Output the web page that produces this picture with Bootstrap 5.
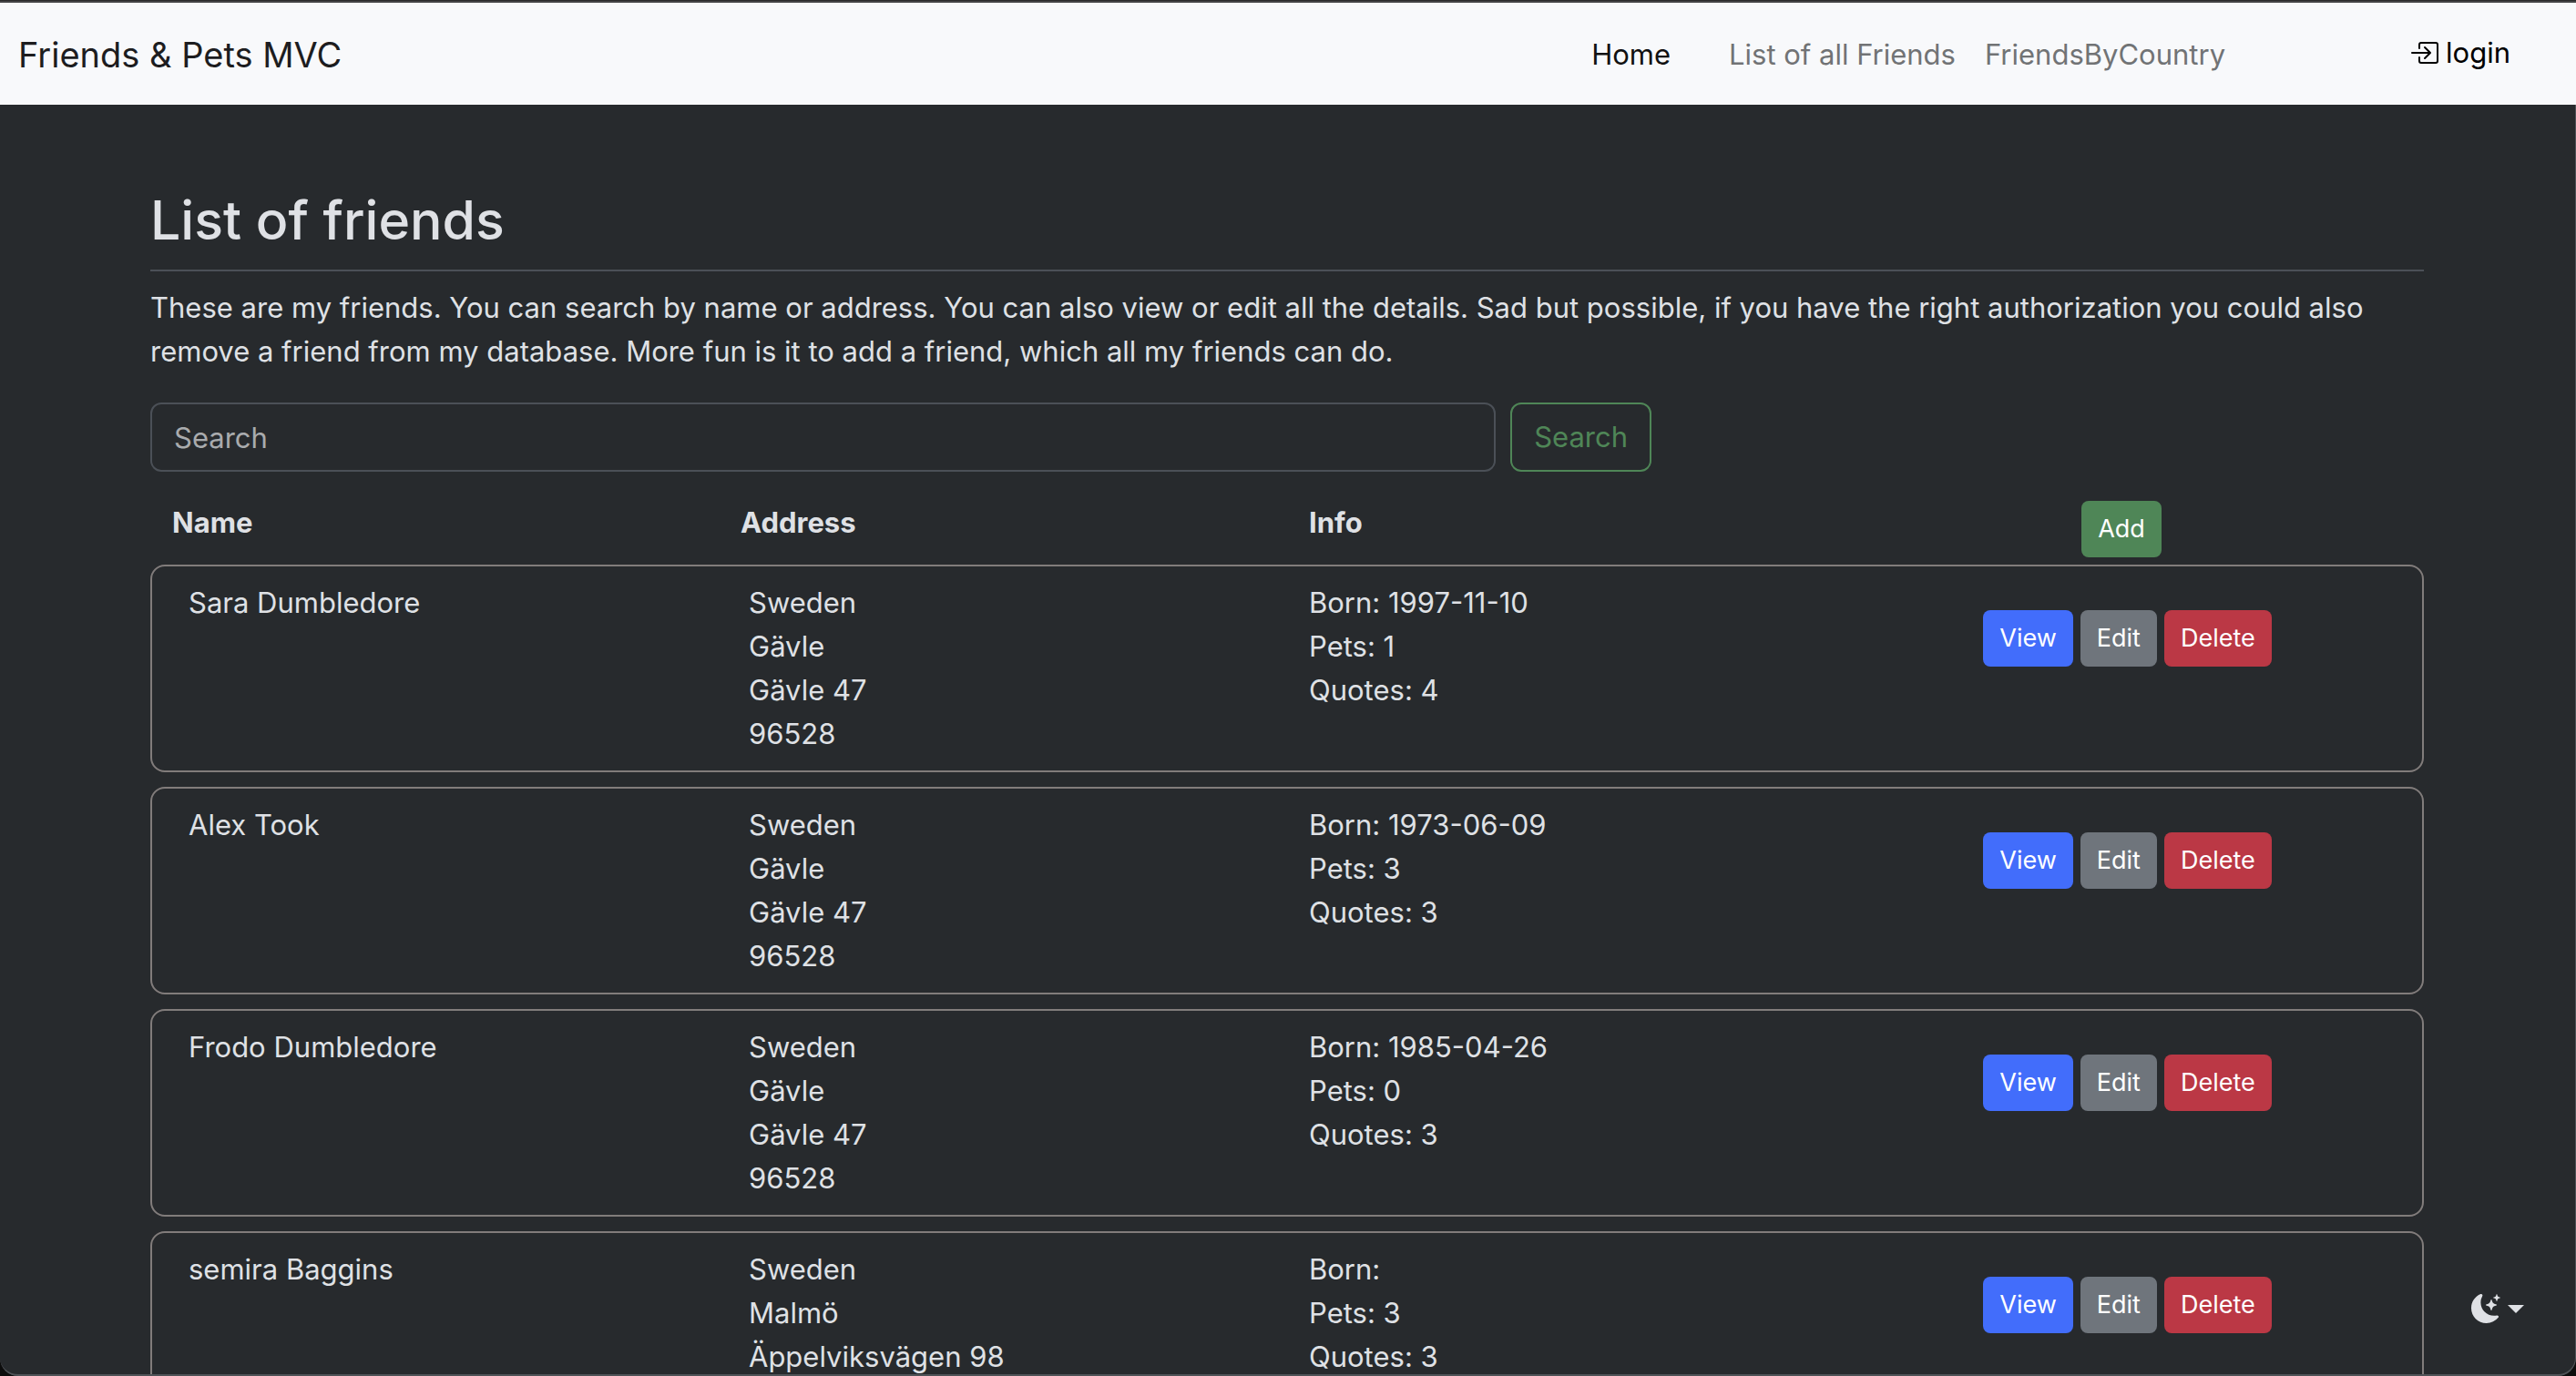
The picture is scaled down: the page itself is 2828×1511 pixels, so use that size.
<!DOCTYPE html>
<html lang="en" data-bs-theme="dark">
<head>
<meta charset="utf-8">
<meta name="viewport" content="width=device-width, initial-scale=1">
<title>Friends &amp; Pets MVC</title>
<link href="https://cdn.jsdelivr.net/npm/bootstrap@5.3.0/dist/css/bootstrap.min.css" rel="stylesheet">
<style>
  html { font-size: 32px; }
  body {
    font-family: Inter, "Liberation Sans", sans-serif;
    font-size: 31px;
    line-height: 48px;
    color: #dfe1e5;
    background: #272a2d;
    padding-right: 2px;
  }
  /* window frame around the page */
  .window-top { height: 3px; background: #434345; border-top: 1px solid #2a2a2b; margin-right: -2px; flex: none; }
  .window-edge {
    position: fixed; inset: 3px 0 0 0; pointer-events: none; z-index: 10;
    border: solid #4f5357; border-width: 0 1px 2px 0;
    border-radius: 0 0 20px 20px;
    box-shadow: 0 0 0 20px #0d0d0d;
    clip-path: inset(112px 0 0 0);
  }
  .top-nav { background: #f8f9fb; min-height: 112px; margin-right: -2px; padding: 2px 72px 0 20px; flex: none; }
  .top-nav .navbar-brand { font-size: 38px; color: #1d1d1f; }
  .top-nav a { color: #717375; text-decoration: none; }
  .top-nav .link-home { color: #111; margin-right: 64px; }
  .top-nav .nav-login { color: #000; margin-left: 202px; gap: 8px; padding-bottom: 4px; }
  .friends-main { overflow-y: auto; scrollbar-width: none; min-height: 0; }
  .friends-main::-webkit-scrollbar { display: none; }
  .page-wrap { max-width: 2496px; padding-top: 88px; }
  .page-title { font-size: 59px; line-height: 77px; color: #dfe1e5; border-bottom: 2px solid #4b5057; }
  .form-control { font-size: 31px; line-height: 48px; height: 76px; padding: 12px 24px; background: #272a2d; border: 2px solid #4b5057; border-radius: 12px; }
  .form-control::placeholder { color: #a9abad; opacity: 1; }
  .btn { border-width: 2px; }
  .btn-search { font-size: 31px; line-height: 48px; padding: 12px 24px; border-radius: 12px; color: #4f8657; border-color: #4f8657; height: 76px; display: flex; align-items: center; }
  .btn-sm { font-size: 27px; line-height: 42px; padding: 8px 16px; border-radius: 8px; color: #fff; }
  .btn-add { background: #4f8657; }
  .btn-view { background: #426dfb; }
  .btn-edit { background: #6f757c; }
  .btn-del { background: #bb3845; }
  .head-row { margin: 32px 0 0; min-height: 70px; }
  .head-row .add-col { padding-right: 64px; }
  .friend-item { border: 2px solid #817c7b; border-radius: 16px; padding: 16px; margin-bottom: 16px; }
  .friend-item .btn-col { padding-top: 32px; gap: 8px; }
  .theme-toggle { position: fixed; right: 57px; bottom: 58px; color: #dfe1e5; gap: 8px; }
  .caret-down { border: 9px solid transparent; border-top-color: #dfe1e5; border-bottom: 0; }
</style>
</head>
<body class="vh-100 overflow-hidden d-flex flex-column">
<div class="window-top"></div>
<nav class="top-nav d-flex align-items-center">
  <a class="navbar-brand me-auto" href="#">Friends &amp; Pets MVC</a>
  <a class="link-home" href="#">Home</a>
  <a class="me-3" href="#">List of all Friends</a>
  <a href="#">FriendsByCountry</a>
  <a class="nav-login d-flex align-items-center" href="#">
    <svg width="32" height="32" viewBox="0 0 16 16" fill="currentColor" aria-hidden="true"><path d="M6 3.500a.5.5 0 0 1 .5-.5h8a.5.5 0 0 1 .5.5v9a.5.5 0 0 1-.5.5h-8a.5.5 0 0 1-.5-.5v-2a.5.5 0 0 0-1 0v2A1.500 1.500 0 0 0 6.500 14h8a1.500 1.500 0 0 0 1.500-1.500v-9A1.500 1.500 0 0 0 14.500 2h-8A1.500 1.500 0 0 0 5 3.500v2a.5.5 0 0 0 1 0z"/><path d="M11.854 8.354a.5.5 0 0 0 0-.708l-3-3a.5.5 0 1 0-.708.708L10.293 7.500H1.500a.5.5 0 0 0 0 1h8.793l-2.147 2.146a.5.5 0 0 0 .708.708z"/></svg>
    <span>login</span>
  </a>
</nav>
<main class="friends-main flex-grow-1">
  <div class="page-wrap mx-auto">
    <h2 class="page-title pb-2 mb-2">List of friends</h2>
    <p class="intro mb-3">These are my friends. You can search by name or address. You can also view or edit all the details. Sad but possible, if you have the right authorization you could also remove a friend from my database. More fun is it to add a friend, which all my friends can do.</p>
    <div class="row">
      <form class="col-8 d-flex gap-2" role="search">
        <input class="form-control" type="search" placeholder="Search" aria-label="Search">
        <button class="btn btn-search" type="button">Search</button>
      </form>
    </div>
    <div class="row head-row fw-bold">
      <div class="col-3">Name</div>
      <div class="col-3">Address</div>
      <div class="col-3">Info</div>
      <div class="col-3 text-center add-col"><a class="btn btn-sm btn-add" href="#">Add</a></div>
    </div>

    <div class="friend-item"><div class="row mx-0">
      <div class="col-3">Sara Dumbledore</div>
      <div class="col-3">Sweden<br>Gävle<br>Gävle 47<br>96528</div>
      <div class="col-3">Born: 1997-11-10<br>Pets: 1<br>Quotes: 4</div>
      <div class="col-3 btn-col d-flex justify-content-center align-items-start"><a class="btn btn-sm btn-view" href="#">View</a><a class="btn btn-sm btn-edit" href="#">Edit</a><button class="btn btn-sm btn-del" type="button">Delete</button></div>
    </div></div>

    <div class="friend-item"><div class="row mx-0">
      <div class="col-3">Alex Took</div>
      <div class="col-3">Sweden<br>Gävle<br>Gävle 47<br>96528</div>
      <div class="col-3">Born: 1973-06-09<br>Pets: 3<br>Quotes: 3</div>
      <div class="col-3 btn-col d-flex justify-content-center align-items-start"><a class="btn btn-sm btn-view" href="#">View</a><a class="btn btn-sm btn-edit" href="#">Edit</a><button class="btn btn-sm btn-del" type="button">Delete</button></div>
    </div></div>

    <div class="friend-item"><div class="row mx-0">
      <div class="col-3">Frodo Dumbledore</div>
      <div class="col-3">Sweden<br>Gävle<br>Gävle 47<br>96528</div>
      <div class="col-3">Born: 1985-04-26<br>Pets: 0<br>Quotes: 3</div>
      <div class="col-3 btn-col d-flex justify-content-center align-items-start"><a class="btn btn-sm btn-view" href="#">View</a><a class="btn btn-sm btn-edit" href="#">Edit</a><button class="btn btn-sm btn-del" type="button">Delete</button></div>
    </div></div>

    <div class="friend-item"><div class="row mx-0">
      <div class="col-3">semira Baggins</div>
      <div class="col-3">Sweden<br>Malmö<br>Äppelviksvägen 98</div>
      <div class="col-3">Born:<br>Pets: 3<br>Quotes: 3</div>
      <div class="col-3 btn-col d-flex justify-content-center align-items-start"><a class="btn btn-sm btn-view" href="#">View</a><a class="btn btn-sm btn-edit" href="#">Edit</a><button class="btn btn-sm btn-del" type="button">Delete</button></div>
    </div></div>
  </div>
</main>
<button class="theme-toggle d-flex align-items-center border-0 bg-transparent p-0" type="button" aria-label="Toggle theme">
  <svg width="32" height="32" viewBox="0 0 16 16" fill="currentColor" aria-hidden="true"><path d="M6 .278a.768.768 0 0 1 .08.858 7.208 7.208 0 0 0-.878 3.460c0 4.021 3.278 7.277 7.318 7.277.527 0 1.040-.055 1.533-.160a.787.787 0 0 1 .810.316.733.733 0 0 1-.031.893A8.349 8.349 0 0 1 8.344 16C3.734 16 0 12.286 0 7.710 0 4.266 2.114 1.312 5.124.060A.752.752 0 0 1 6 .278z"/><path d="M10.794 3.148a.217.217 0 0 1 .412 0l.387 1.162c.173.518.579.924 1.097 1.097l1.162.387a.217.217 0 0 1 0 .412l-1.162.387a1.734 1.734 0 0 0-1.097 1.097l-.387 1.162a.217.217 0 0 1-.412 0l-.387-1.162A1.734 1.734 0 0 0 9.310 6.593l-1.162-.387a.217.217 0 0 1 0-.412l1.162-.387a1.734 1.734 0 0 0 1.097-1.097zM13.863.099a.145.145 0 0 1 .274 0l.258.774c.115.346.386.617.732.732l.774.258a.145.145 0 0 1 0 .274l-.774.258a1.156 1.156 0 0 0-.732.732l-.258.774a.145.145 0 0 1-.274 0l-.258-.774a1.156 1.156 0 0 0-.732-.732l-.774-.258a.145.145 0 0 1 0-.274l.774-.258c.346-.115.617-.386.732-.732z"/></svg>
  <span class="caret-down"></span>
</button>
<div class="window-edge"></div>
<script src="https://cdn.jsdelivr.net/npm/bootstrap@5.3.0/dist/js/bootstrap.bundle.min.js"></script>
</body>
</html>
